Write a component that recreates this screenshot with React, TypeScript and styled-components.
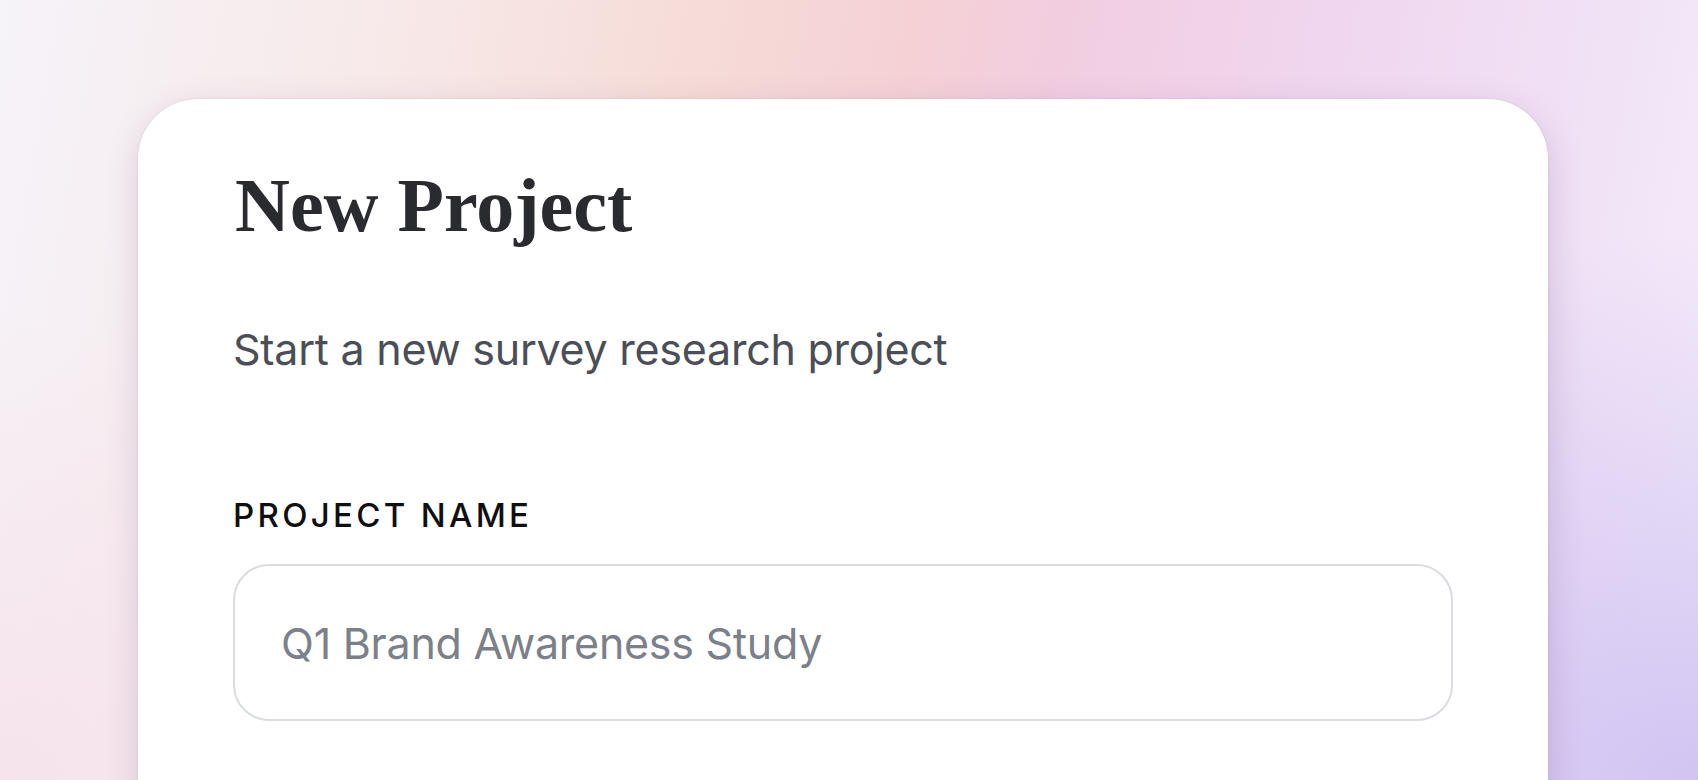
import styled, { createGlobalStyle } from "styled-components";

const GlobalStyle = createGlobalStyle`
  * {
    box-sizing: border-box;
  }
  html,
  body {
    margin: 0;
    height: 780px;
    overflow: hidden;
  }
  body {
    font-family: "Inter", "Liberation Sans", sans-serif;
  }
`;

export default function App() {
  return (
    <>
      <GlobalStyle />
      <Page>
        <Card>
          <Title>New Project</Title>
          <Subtitle>Start a new survey research project</Subtitle>
          <Field>
            <Label htmlFor="project-name">Project name</Label>
            <TextInput
              id="project-name"
              type="text"
              placeholder="Q1 Brand Awareness Study"
            />
          </Field>
        </Card>
      </Page>
    </>
  );
}

const Page = styled.main`
  height: 780px;
  padding: 99px 0 0 138px;
  background:
    radial-gradient(
      ellipse 45% 70% at 100% 100%,
      rgba(208, 194, 242, 0.95) 0%,
      rgba(220, 205, 245, 0) 100%
    ),
    radial-gradient(
      ellipse 30% 60% at 0% 100%,
      rgba(246, 226, 236, 0.9) 0%,
      rgba(246, 226, 236, 0) 100%
    ),
    linear-gradient(
      100deg,
      #f6f3f9 0%,
      #f7e9e8 22%,
      #f6dcd8 38%,
      #f5d1d5 50%,
      #f2cde0 58%,
      #f0d6ee 72%,
      #f1e2f6 88%,
      #f5edfb 100%
    );
`;

const Card = styled.section`
  width: 1410px;
  min-height: 760px;
  padding: 68px 95px 68px 97px;
  background: #ffffff;
  border-radius: 60px;
  box-shadow:
    0 0 2px rgba(90, 60, 110, 0.16),
    2px 12px 36px rgba(90, 60, 120, 0.2);
  display: flex;
  flex-direction: column;
`;

const Title = styled.h1`
  margin: 0;
  font-family: "Liberation Serif", "Times New Roman", serif;
  font-weight: 700;
  font-size: 76px;
  line-height: 1;
  color: #2a2b2f;
`;

const Subtitle = styled.p`
  margin: 85px 0 0 -2px;
  font-size: 43px;
  line-height: 1;
  letter-spacing: -0.25px;
  color: #4b4e56;
`;

const Field = styled.div`
  margin: 128px 0 0 -2px;
  display: flex;
  flex-direction: column;
  gap: 32px;
`;

const Label = styled.label`
  font-size: 33px;
  font-weight: 500;
  line-height: 1;
  letter-spacing: 0.1em;
  text-transform: uppercase;
  color: #0f0f11;
`;

const TextInput = styled.input`
  width: 100%;
  height: 157px;
  padding: 0 46px;
  border: 2px solid #d9dce1;
  border-radius: 36px;
  background: #ffffff;
  font-family: "Inter", "Liberation Sans", sans-serif;
  font-size: 43px;
  letter-spacing: -0.25px;
  color: #2a2b2f;
  outline: none;

  &::placeholder {
    color: #7b8089;
  }
`;
